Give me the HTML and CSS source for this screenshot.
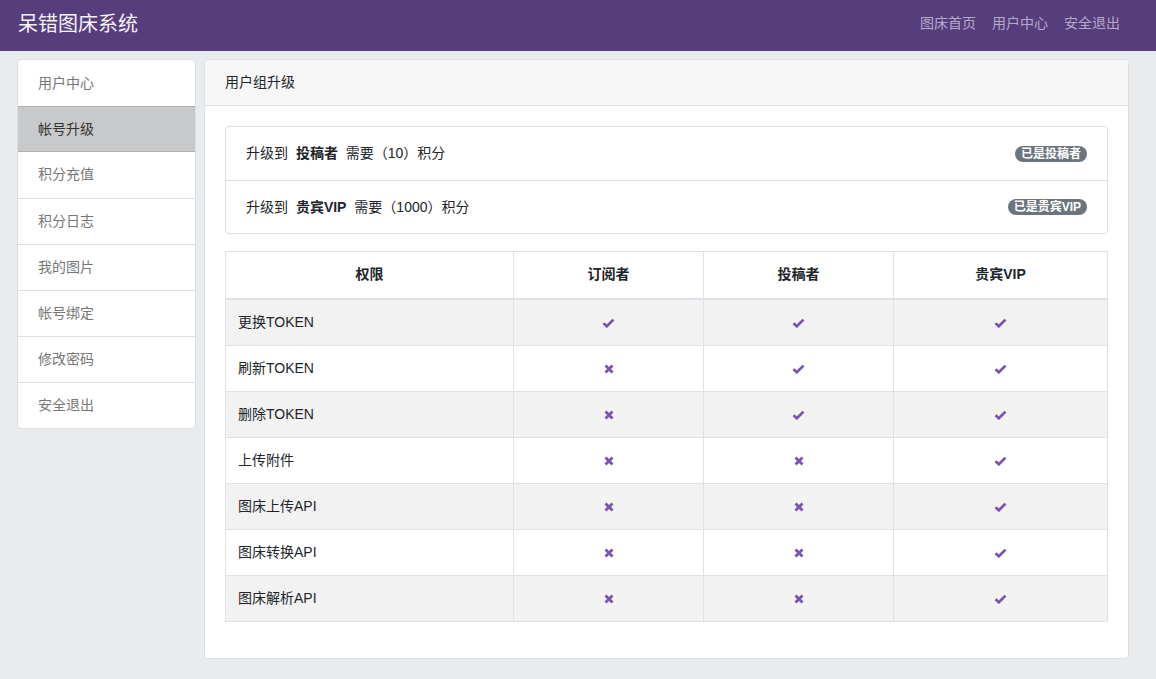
FILE: index.html
```html
<!DOCTYPE html>
<html lang="zh">
<head>
<meta charset="utf-8">
<title>呆错图床系统</title>
<link rel="stylesheet" href="styles.css">
</head>
<body>
<header class="topbar">
  <div class="brand">呆错图床系统</div>
  <nav class="topnav">
    <a href="#">图床首页</a>
    <a href="#">用户中心</a>
    <a href="#">安全退出</a>
  </nav>
</header>
<div class="layout">
  <aside class="sidebar">
    <a class="side-item" href="#">用户中心</a>
    <a class="side-item active" href="#">帐号升级</a>
    <a class="side-item" href="#">积分充值</a>
    <a class="side-item" href="#">积分日志</a>
    <a class="side-item" href="#">我的图片</a>
    <a class="side-item" href="#">帐号绑定</a>
    <a class="side-item" href="#">修改密码</a>
    <a class="side-item" href="#">安全退出</a>
  </aside>
  <main class="card">
    <div class="card-header">用户组升级</div>
    <div class="card-body">
      <ul class="list-group">
        <li class="list-item">
          <span>升级到 <b>投稿者</b> 需要（10）积分</span>
          <span class="badge">已是投稿者</span>
        </li>
        <li class="list-item">
          <span>升级到 <b>贵宾VIP</b> 需要（1000）积分</span>
          <span class="badge">已是贵宾VIP</span>
        </li>
      </ul>
      <table class="perm">
        <colgroup>
          <col class="c1"><col class="c2"><col class="c3"><col class="c4">
        </colgroup>
        <thead>
          <tr><th>权限</th><th>订阅者</th><th>投稿者</th><th>贵宾VIP</th></tr>
        </thead>
        <tbody>
          <tr><td>更换TOKEN</td><td class="ic"><svg class="ok" viewBox="0 0 12 10"><path d="M1 5.3 L4.3 8.3 L11 1.6"/></svg></td><td class="ic"><svg class="ok" viewBox="0 0 12 10"><path d="M1 5.3 L4.3 8.3 L11 1.6"/></svg></td><td class="ic"><svg class="ok" viewBox="0 0 12 10"><path d="M1 5.3 L4.3 8.3 L11 1.6"/></svg></td></tr>
          <tr><td>刷新TOKEN</td><td class="ic"><svg class="no" viewBox="0 0 10 10"><path d="M1.5 1.5 L8.5 8.5 M8.5 1.5 L1.5 8.5"/></svg></td><td class="ic"><svg class="ok" viewBox="0 0 12 10"><path d="M1 5.3 L4.3 8.3 L11 1.6"/></svg></td><td class="ic"><svg class="ok" viewBox="0 0 12 10"><path d="M1 5.3 L4.3 8.3 L11 1.6"/></svg></td></tr>
          <tr><td>删除TOKEN</td><td class="ic"><svg class="no" viewBox="0 0 10 10"><path d="M1.5 1.5 L8.5 8.5 M8.5 1.5 L1.5 8.5"/></svg></td><td class="ic"><svg class="ok" viewBox="0 0 12 10"><path d="M1 5.3 L4.3 8.3 L11 1.6"/></svg></td><td class="ic"><svg class="ok" viewBox="0 0 12 10"><path d="M1 5.3 L4.3 8.3 L11 1.6"/></svg></td></tr>
          <tr><td>上传附件</td><td class="ic"><svg class="no" viewBox="0 0 10 10"><path d="M1.5 1.5 L8.5 8.5 M8.5 1.5 L1.5 8.5"/></svg></td><td class="ic"><svg class="no" viewBox="0 0 10 10"><path d="M1.5 1.5 L8.5 8.5 M8.5 1.5 L1.5 8.5"/></svg></td><td class="ic"><svg class="ok" viewBox="0 0 12 10"><path d="M1 5.3 L4.3 8.3 L11 1.6"/></svg></td></tr>
          <tr><td>图床上传API</td><td class="ic"><svg class="no" viewBox="0 0 10 10"><path d="M1.5 1.5 L8.5 8.5 M8.5 1.5 L1.5 8.5"/></svg></td><td class="ic"><svg class="no" viewBox="0 0 10 10"><path d="M1.5 1.5 L8.5 8.5 M8.5 1.5 L1.5 8.5"/></svg></td><td class="ic"><svg class="ok" viewBox="0 0 12 10"><path d="M1 5.3 L4.3 8.3 L11 1.6"/></svg></td></tr>
          <tr><td>图床转换API</td><td class="ic"><svg class="no" viewBox="0 0 10 10"><path d="M1.5 1.5 L8.5 8.5 M8.5 1.5 L1.5 8.5"/></svg></td><td class="ic"><svg class="no" viewBox="0 0 10 10"><path d="M1.5 1.5 L8.5 8.5 M8.5 1.5 L1.5 8.5"/></svg></td><td class="ic"><svg class="ok" viewBox="0 0 12 10"><path d="M1 5.3 L4.3 8.3 L11 1.6"/></svg></td></tr>
          <tr><td>图床解析API</td><td class="ic"><svg class="no" viewBox="0 0 10 10"><path d="M1.5 1.5 L8.5 8.5 M8.5 1.5 L1.5 8.5"/></svg></td><td class="ic"><svg class="no" viewBox="0 0 10 10"><path d="M1.5 1.5 L8.5 8.5 M8.5 1.5 L1.5 8.5"/></svg></td><td class="ic"><svg class="ok" viewBox="0 0 12 10"><path d="M1 5.3 L4.3 8.3 L11 1.6"/></svg></td></tr>
        </tbody>
      </table>
    </div>
  </main>
</div>
</body>
</html>
```
FILE: styles.css
```css
* { box-sizing: border-box; }
html, body { margin: 0; padding: 0; }
body {
  background: #e9ecef;
  font-family: "Liberation Sans", "Noto Sans CJK SC", sans-serif;
  font-size: 14px;
  line-height: 21px;
  color: #212529;
}
a { text-decoration: none; }

.topbar {
  height: 51px;
  background: #563d7c;
  display: flex;
  align-items: center;
  justify-content: space-between;
  padding: 0 36px 0 18px;
}
.brand {
  color: #f4f2f7;
  font-size: 20px;
  line-height: 24px;
  padding-bottom: 4px;
}
.topnav { display: flex; gap: 16px; padding-bottom: 4px; }
.topnav a { color: #b6aac8; font-size: 14px; }

.layout {
  display: flex;
  align-items: flex-start;
  gap: 8px;
  padding: 8px 27px 20px 17px;
}
.sidebar {
  width: 179px;
  flex: none;
  background: #fff;
  border: 1px solid #dfdfdf;
  border-radius: 4px;
  overflow: hidden;
  display: flex;
  flex-direction: column;
}
.side-item {
  display: block;
  height: 46px;
  padding: 12px 20px;
  color: #777;
  border-top: 1px solid #dfdfdf;
}
.side-item:first-child { border-top: none; height: 46px; padding-top: 13px; }
.side-item.active {
  background: #c8c9ca;
  color: #333;
  border-top-color: #b0b0b0;
  border-bottom: 1px solid #b0b0b0;
  height: 46px;
}
.side-item.active + .side-item { border-top: none; }

.card {
  flex: 1;
  background: #fff;
  border: 1px solid #dfdfdf;
  border-radius: 4px;
  overflow: hidden;
}
.card-header {
  height: 46px;
  background: #f7f7f7;
  border-bottom: 1px solid #dfdfdf;
  padding: 12px 20px;
}
.card-body { padding: 20px 20px 36px; }

.list-group {
  list-style: none;
  margin: 0 0 17px;
  padding: 0;
  border: 1px solid #dfdfdf;
  border-radius: 4px;
}
.list-item {
  display: flex;
  justify-content: space-between;
  align-items: center;
  height: 53px;
  padding: 0 20px;
}
.list-item + .list-item { border-top: 1px solid #dfdfdf; }
.list-item b { font-weight: bold; margin: 0 4px; }
.badge {
  background: #6c757d;
  color: #fff;
  font-size: 12px;
  font-weight: bold;
  line-height: 16px;
  padding: 0 6px;
  border-radius: 9px;
}

.perm {
  width: 100%;
  border-collapse: collapse;
  border: 1px solid #dee2e6;
}
.c1 { width: 288px; }
.c2 { width: 190px; }
.c3 { width: 190px; }
.perm th, .perm td {
  border: 1px solid #dee2e6;
  padding: 12px 12px;
  height: 46px;
  vertical-align: middle;
}
.perm th {
  text-align: center;
  font-weight: bold;
  border-bottom: 2px solid #dee2e6;
  height: 47px;
}
.perm tbody tr:nth-child(odd) { background: #f2f2f2; }
.perm td.ic { text-align: center; padding: 0; }
.perm svg { display: inline-block; vertical-align: middle; fill: none; stroke: #7952b3; }
.perm svg.ok { width: 13px; height: 10px; stroke-width: 2.7; }
.perm svg.no { width: 10px; height: 10px; stroke-width: 2.8; }
```
